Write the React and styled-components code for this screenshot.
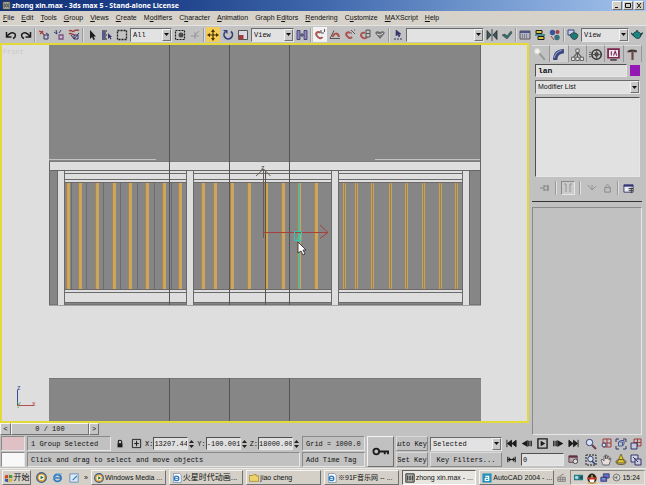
import { useState } from 'react';
import styled, { createGlobalStyle, css } from 'styled-components';

const GlobalStyle = createGlobalStyle`
  * {
    box-sizing: border-box;
  }
  body {
    margin: 0;
    background: #c1c1c1;
    color: #101010;
    font-family: "Liberation Sans", "Noto Sans CJK SC", sans-serif;
    font-size: 7px;
    line-height: 10px;
  }
  button, input, select {
    font: inherit;
    color: inherit;
    margin: 0;
    padding: 0;
    border: 0;
    border-radius: 0;
    background: none;
    min-width: 0;
  }
`;

const raised = css`
  border: 1px solid;
  border-color: #f4f4f4 #707070 #707070 #f4f4f4;
`;

const sunken = css`
  border: 1px solid;
  border-color: #8a8a8a #e6e6e6 #e6e6e6 #8a8a8a;
`;

const mono = css`
  font-family: "Liberation Mono", monospace;
  font-size: 7px;
`;

const Page = styled.div`
  min-height: 100vh;
  display: flex;
  flex-direction: column;
`;

const TitleBar = styled.header`
  height: 11px;
  display: flex;
  align-items: center;
  gap: 1px;
  padding: 0 2px;
  color: #fff;
  background: linear-gradient(90deg, #123279 0%, #1d4088 25%, #4068ac 50%, #7398cf 75%, #a3c3ec 100%);
`;

const Title = styled.h1`
  flex: 1;
  margin: 0;
  font-family: "Noto Sans", "Liberation Sans", sans-serif;
  font-size: 7px;
  font-weight: bold;
  white-space: nowrap;
`;

const WindowButton = styled.button`
  && {
    ${raised}
    width: 10px;
    height: 9px;
    background: #d4d0c8;
    display: flex;
  }
`;

const MenuBar = styled.nav`
  height: 14px;
  display: flex;
  align-items: center;
  gap: 7px;
  padding: 0 3px;
  background: #d6d2ca;
`;

const MenuLink = styled.a`
  color: inherit;
  text-decoration: none;
  white-space: nowrap;
`;

const Toolbar = styled.div`
  height: 18px;
  display: flex;
  align-items: center;
  gap: 1px;
  padding: 0 2px 0 4px;
  border-top: 1px solid #e4e4e4;
  background: #c3c3c3;
`;

const Separator = styled.span`
  width: 2px;
  height: 14px;
  border-left: 1px solid #9a9a9a;
  border-right: 1px solid #dedede;
  flex: none;
`;

const ToolButton = styled.button`
  && {
    width: 14px;
    height: 15px;
    flex: none;
    display: flex;
    align-items: center;
    justify-content: center;
    background: ${props => props.$fill || 'none'};
  }
`;

const SelectBox = styled.span`
  border: 1px solid;
  border-color: #6a6a6a #e6e6e6 #e6e6e6 #6a6a6a;
  position: relative;
  display: flex;
  height: 14px;
  width: ${props => props.$width ? `${props.$width}px` : 'auto'};
  flex: ${props => props.$width ? 'none' : '1'};
  min-width: 0;
  background: #e2e2e2;

  select {
    ${props => !props.$plain && mono}
    appearance: none;
    width: 100%;
    padding: 0 10px 0 2px;
    outline: none;
  }
`;

const DropArrow = styled.span`
  ${raised}
  position: absolute;
  top: 0;
  right: 0;
  bottom: 0;
  width: 9px;
  background: #c8c8c8;
  pointer-events: none;
  display: flex;
  align-items: center;
  justify-content: center;
`;

const Workspace = styled.main`
  flex: 1;
  display: flex;
  align-items: stretch;
`;

const LeftColumn = styled.div`
  flex: 1;
  min-width: 0;
  display: flex;
  flex-direction: column;
`;

const Viewport = styled.section`
  flex: 1;
  min-height: 200px;
  display: flex;
  border: 2px solid #e3d93a;
  background: #dedede;

  svg {
    flex: 1;
    width: 100%;
    min-width: 0;
    height: auto;
  }
`;

const TimeSlider = styled.div`
  ${mono}
  height: 12px;
  display: flex;
`;

const TimeButton = styled.button`
  && {
    ${raised}
    width: ${props => props.$width}px;
    display: flex;
    align-items: center;
    justify-content: center;
    background: #c4c4c4;
    white-space: pre;
  }
`;

const SidePanel = styled.aside`
  width: 117px;
  display: flex;
  flex-direction: column;
  padding: 2px 4px 0 3px;
  background: #c1c1c1;
`;

const Tabs = styled.div`
  display: flex;
  height: 17px;
`;

const Tab = styled.button`
  && {
    flex: 1;
    display: flex;
    align-items: center;
    justify-content: center;
    border-right: 1px solid #969696;
    border-top: 1px solid #dcdcdc;
    background: ${props => props.$active ? '#d0d0d0' : 'none'};
  }
`;

const PanelBody = styled.div`
  padding: 2px 2px 0 3px;
  display: flex;
  flex-direction: column;
  gap: 3px;
`;

const NameRow = styled.div`
  display: flex;
  align-items: center;
  gap: 3px;
`;

const NameInput = styled.input`
  && {
    border: 1px solid;
    border-color: #505050 #e6e6e6 #e6e6e6 #505050;
    flex: 1;
    height: 13px;
    padding-left: 2px;
    font-family: "Liberation Mono", monospace;
    font-size: 8px;
    font-weight: bold;
    background: #e0e0e0;
  }
`;

const Swatch = styled.button`
  && {
    width: 10px;
    height: 11px;
    background: #9318b4;
  }
`;

const StackList = styled.div`
  border: 1px solid;
  border-color: #505050 #e6e6e6 #e6e6e6 #505050;
  height: 80px;
  background: #e1e1e1;
`;

const StackTools = styled.div`
  height: 16px;
  display: flex;
  align-items: center;
  justify-content: space-between;
  padding: 0 6px 0 4px;
`;

const Rollout = styled.div`
  flex: 1;
  margin-top: 5px;
  ${sunken}
`;

const Rule = styled.hr`
  width: 100%;
  margin: 5px 0 0;
  border: 0;
  border-top: 1px solid #333;
`;

const StatusBar = styled.section`
  ${mono}
  height: 33px;
  display: flex;
  gap: 2px;
  padding: 1px 2px 0 1px;
  background: #c1c1c1;
`;

const Stack = styled.div`
  display: flex;
  flex-direction: column;
  gap: 1px;
  width: ${props => props.$width ? `${props.$width}px` : 'auto'};
  flex: ${props => props.$width ? 'none' : '1'};
  min-width: 0;
`;

const Row = styled.div`
  height: 15px;
  display: flex;
  align-items: center;
  gap: 2px;
`;

const Listener = styled.div`
  ${sunken}
  height: 15px;
  background: ${props => props.$fill};
`;

const Readout = styled.output`
  ${sunken}
  height: 15px;
  padding: 2px 3px;
  flex: none;
  width: ${props => props.$width ? `${props.$width}px` : 'auto'};
  white-space: nowrap;
  overflow: hidden;
`;

const Field = styled.label`
  display: flex;
  align-items: center;
  flex: 1;
  min-width: 0;
`;

const NumberInput = styled.input`
  && {
    border: 1px solid;
    border-color: #505050 #e6e6e6 #e6e6e6 #505050;
    flex: 1;
    width: 20px;
    height: 13px;
    background: #e0e0e0;
  }
`;

const FlatButton = styled.button`
  && {
    ${raised}
    ${props => props.$shadow && 'border-color: #dadada #8a8a8a #8a8a8a #dadada;'}
    height: ${props => props.$tall ? 31 : 15}px;
    width: ${props => props.$width ? `${props.$width}px` : '100%'};
    display: flex;
    align-items: center;
    justify-content: ${props => props.$end ? 'flex-end' : 'center'};
    overflow: hidden;
    white-space: nowrap;
  }
`;

const Playback = styled.div`
  display: grid;
  grid-template-columns: repeat(5, 1fr);
  width: 77px;
  flex: none;
  align-items: center;
  justify-items: center;
`;

const FrameInput = styled.input`
  && {
    border: 1px solid;
    border-color: #505050 #e6e6e6 #e6e6e6 #505050;
    grid-column: span 3;
    width: 43px;
    height: 13px;
    padding-left: 1px;
    background: #e0e0e0;
  }
`;

const NavGrid = styled.div`
  display: grid;
  grid-template-columns: repeat(4, 1fr);
  width: 61px;
  flex: none;
  align-items: center;
  justify-items: center;
`;

const TaskBar = styled.footer`
  height: 18px;
  display: flex;
  align-items: center;
  gap: 3px;
  padding: 1px 1px 1px 2px;
  border-top: 1px solid #efede8;
  background: #d4d0c8;
`;

const StartButton = styled.button`
  && {
    ${raised}
    height: 15px;
    width: 29px;
    display: flex;
    align-items: center;
    justify-content: center;
    flex: none;
    font-size: 8px;
    white-space: nowrap;
  }
`;

const QuickLaunch = styled.div`
  display: flex;
  align-items: center;
  justify-content: space-between;
  width: 54px;
  padding-left: 2px;
  flex: none;
`;

const Task = styled.button`
  && {
    ${raised}
    ${props => props.$active && 'border-color: #606060 #fff #fff #606060; background: #e8e6e1;'}
    flex: 1 1 0;
    height: 15px;
    padding: 0 1px 0 2px;
    display: flex;
    align-items: center;
    gap: 1px;
    font-size: ${props => props.$size || 7}px;
    white-space: nowrap;
    overflow: hidden;
  }
`;

const Tray = styled.div`
  ${sunken}
  height: 15px;
  width: 75px;
  display: flex;
  align-items: center;
  justify-content: space-between;
  padding: 0 4px 0 2px;
  flex: none;
`;

const IconButton = styled.button`
  && {
    display: flex;
    align-items: center;
    justify-content: center;
    ${props => props.$pressed && 'border: 1px solid; border-color: #8a8a8a #e6e6e6 #e6e6e6 #8a8a8a; background: #cacaca;'}
  }
`;

const Glyph = styled.svg`
  flex: none;
`;

const K = '#1c1c1c';
const NAVY = '#34346a';
const RED = '#a33a3a';
const TEAL = '#1c7a78';

// every drawing sits on a 12 x 12 grid
const art = {
  undo: <path d="M1.5 3v5h5M2 7.500C4 4 8 2.500 10 5c1.200 2-.5 4-2 4.500" stroke={K} strokeWidth="1.500" />,
  redo: <path d="M10.500 3v5h-5M10 7.500C8 4 4 2.500 2 5c-1.200 2 .5 4 2 4.500" stroke={K} strokeWidth="1.500" />,
  link: <><path d="M1 2l3 1 2 3M2 5l3-3" stroke={RED} strokeWidth="1.300" /><path d="M6 6h4v4H6zM8 4l3 2" stroke={NAVY} /></>,
  unlink: <><path d="M1 3l3 2M3 1l1 4M8 1L6 4" stroke={NAVY} /><path d="M6 6h4v4H6z" stroke="#7b4f86" strokeWidth="1.300" /></>,
  bind: <><path d="M1 2c3-2 3 2 5 0s3 0 5-1M1 5c3-2 3 2 5 0" stroke={RED} strokeWidth="1.300" /><path d="M3 6l3 4 5-6M6 6h4v4H6z" stroke={NAVY} /></>,
  arrow: <path d="M4 1v9l2-2 1.500 3 1.500-.700L7.500 7.500H10z" fill={K} />,
  byName: <><path d="M1 2h5M1 4h4M1 6h5M1 8h4M1 10h5" stroke={K} /><path d="M1 1.500h3v9H1z" fill="#555a86" /><path d="M7 4v6l1.500-1.500 1 2 1-.5-1-2H11z" fill={NAVY} /></>,
  marquee: <path d="M1.500 1.500h9v9h-9z" stroke={K} strokeWidth="1.300" strokeDasharray="2 1" />,
  crossing: <><path d="M1.500 1.500h9v9h-9z" stroke={K} strokeWidth="1.200" strokeDasharray="2 1" /><circle cx="7" cy="6" r="2.500" fill="#4a4a4a" /></>,
  filter: <path d="M2 7h8M6 3v7M6 6l4-4" stroke="#959595" />,
  move: <path d="M6 0l2 3H6.600v2.400H9V4l3 2-3 2V6.600H6.600V9H8l-2 3-2-3h1.400V6.600H3V8L0 6l3-2v1.400h2.400V3H4z" fill="#4b3000" />,
  rotate: <><path d="M3 3a4.200 4.200 0 1 0 6-.5" stroke="#34407a" strokeWidth="1.700" /><path d="M1 1h4.500v4z" fill="#34407a" /></>,
  scale: <><path d="M1.500 1.500h9v9h-9z" stroke="#555" fill="#d8d8e4" /><path d="M2 6h4.500v4.500H2z" fill={RED} /></>,
  pivot: <><path d="M1 1.500h3v9H1zM8 1.500h3v9H8z" fill="#8d88b8" stroke={NAVY} strokeWidth=".8" /><path d="M4 6h4M6 4v4" stroke={NAVY} /></>,
  snap: <><path d="M6.500 3.500C3 2 1 4.500 3 7s4 3 5.500 1" stroke="#ab5450" strokeWidth="2" /><path d="M7 1v3h3M10.500 0v3" stroke="#555" /></>,
  angle: <><path d="M1 9.500l4-8M1 9.500h10" stroke="#555" /><path d="M4 8c0-4 5-5 6 0" stroke="#ab5450" strokeWidth="2" /></>,
  percent: <><path d="M6.500 4C3 2 1 5 3 7s3 3 5 1" stroke="#ab5450" strokeWidth="2" /><path d="M7 1l4 4M7 4h1M10 1h1" stroke="#555" /></>,
  spinner: <><path d="M6 4C2 3 1 6 3 8s3 2 5 0" stroke="#ab5450" strokeWidth="2" /><path d="M7 1h4v7H7zM7 4.500h4" stroke="#555" /></>,
  keys: <><path d="M1 4l2-2 3 1 3-1 2 2-5 6z" fill="#707070" /><path d="M3 5l3 1 3-2" stroke="#ddd" /></>,
  named: <><path d="M4 1v6l1.500-1.500L7 8l1-1-1-2h2z" fill={NAVY} stroke={NAVY} strokeWidth=".6" /><path d="M2 10h8" stroke={NAVY} strokeDasharray="2 1" /></>,
  mirror: <path d="M1 1.500v9L5 6zM11 1.500v9L7 6zM6 0v12" fill="#3d5a60" stroke={K} strokeWidth=".7" />,
  align: <path d="M1 6l3-1 2 2 4-5 1 2-5 6z" fill="#2e6e68" stroke="#4a4a4a" strokeWidth=".6" />,
  layers: <><path d="M1 2h10v8H1z" fill="#b5b5c7" stroke="#555" /><path d="M1 3h10" stroke="#4c5488" strokeWidth="2" /><path d="M3 6h6M3 8h6" stroke="#555" strokeDasharray="1 1" /></>,
  curves: <><path d="M2 1.500h6v3H2zM4 7.500h6v3H4z" fill="#d6c33f" stroke={K} /><path d="M1 6h10" stroke={TEAL} strokeWidth="1.500" /></>,
  schematic: <><circle cx="3.500" cy="3.500" r="2.700" fill="#3656a0" /><circle cx="8.500" cy="3" r="2" fill="#a63f3f" /><circle cx="8" cy="8.500" r="2.700" fill="#35717a" /><path d="M2 7l3 4" stroke={RED} /></>,
  material: <><path d="M1 1h6v5H1z" fill="#cdd0ed" stroke="#34407a" /><path d="M3 6c2-3 6-3 8 0-1 6-6 6-8 0z" fill={TEAL} stroke={K} strokeWidth=".6" /></>,
  teapot: <><path d="M2 5c2-3 6-3 8 0 0 6-6 6-8 0z" fill="#1f8583" stroke="#24484a" /><path d="M0 4l3 3M12 4c-2 0-2 3-3 3M5 2h2" stroke="#24484a" strokeWidth="1.300" /></>,
  create: <><path d="M5 5l5 6" stroke="#999" strokeWidth="2" /><path d="M3 0v6M0 3h6M1 1l4 4M5 1L1 5" stroke="#f6f6f0" /></>,
  modify: <><path d="M1 11C1 4 5 1 11 1v4C7 5 5 7 5 11z" fill="#39477c" /><path d="M2 9c1-4 3-6 7-7" stroke="#8c9bd0" /></>,
  hierarchy: <><path d="M6 4L2 9M6 4l4 5M6 4v5" stroke="#555" /><path d="M4.500 1h3v3h-3zM.5 8.500h3v3h-3zM8.500 8.500h3v3h-3zM4.500 8.500h3v3h-3z" fill="#e5e5e5" stroke="#555" strokeWidth=".8" /></>,
  motion: <><circle cx="7" cy="6" r="4.300" stroke="#303030" strokeWidth="1.400" /><circle cx="7" cy="6" r="1.500" stroke="#303030" /><path d="M3 6h8M7 2v8M0 4h2M0 6h2M0 8h2" stroke="#505050" strokeWidth=".8" /></>,
  display: <><path d="M1 1h10v8H1z" fill="#ece8f0" stroke="#7e2550" strokeWidth="1.600" /><path d="M4 3v4M6 7l1.500-4L9 7" stroke="#7e2550" /><path d="M3 11h6" stroke="#444" strokeWidth="1.500" /></>,
  utilities: <><path d="M1 4c1-3 4-3 9-2v2H7.500L7 3 4 4z" fill="#3f3636" /><path d="M6 3v8" stroke="#6d4444" strokeWidth="2" /></>,
  pin: <path d="M1 6h4M5 3v6M5 4h4v4H5M9 3v6" stroke="#858585" />,
  endResult: <path d="M4 2v8M8 2v8M2 2h2M8 2h2" stroke="#959595" />,
  unique: <path d="M2 3l4 5M6 3v5M6 8l4-4" stroke="#929292" />,
  trash: <path d="M3 5h6v5H3zM4 5c0-4 4-4 4 0" stroke="#858585" />,
  configure: <><path d="M1 2h10v8H1z" fill="#ededf5" stroke="#333563" /><path d="M1 3h10" stroke="#34347a" strokeWidth="2" /><path d="M6 6h5M6 8h5M9 5v6" stroke="#333" /></>,
  lock: <><path d="M3 5h6v5H3z" fill={K} /><path d="M4 5V3c0-2 4-2 4 0v2" stroke={K} strokeWidth="1.300" /></>,
  absolute: <><path d="M1.500 1.500h9v9h-9z" stroke={K} /><path d="M6 3v6M3.500 6h5" stroke={K} /><circle cx="6" cy="6" r="1" fill={K} /></>,
  key: <><circle cx="3" cy="6" r="2" stroke={K} strokeWidth="1.300" /><path d="M5 6h7M9 6v2M11.300 6v2" stroke={K} strokeWidth="1.300" /></>,
  start: <path d="M1 2v8M1.500 6L6 2.500v7zM6.500 6L11 2.500v7z" fill={K} stroke={K} />,
  prev: <path d="M1 6l4.500-2.500v5zM7.500 3v6M10 3v6" fill={K} stroke={K} strokeWidth="1.500" />,
  play: <><path d="M1 1h10v10H1z" stroke={K} strokeWidth="1.500" /><path d="M4 3l5 3-5 3z" fill={K} /></>,
  next: <path d="M11 6L6.500 3.500v5zM4.500 3v6M2 3v6" fill={K} stroke={K} strokeWidth="1.500" />,
  end: <path d="M11 2v8M10.500 6L6 2.500v7zM5.500 6L1 2.500v7z" fill={K} stroke={K} />,
  keyMode: <path d="M2 3v6M10 3v6M2 6h8M4 4v4M8 4v4" stroke={K} strokeWidth="1.300" />,
  timeConfig: <><path d="M1 2h9v7H1z" fill="#bba9b5" stroke="#5f3040" /><path d="M1 3h9" stroke="#5f3040" strokeWidth="2" /><circle cx="8" cy="8" r="2.500" fill="#ddd" stroke="#444" /></>,
  zoom: <><circle cx="4.500" cy="4.500" r="3.200" fill="#d9e4f3" stroke="#34407a" /><path d="M7 7l4 4" stroke="#6d3c52" strokeWidth="2" /></>,
  zoomAll: <><path d="M3 1h8v8H3zM7 1v8M3 5h8" stroke={RED} /><circle cx="4" cy="7" r="2" fill="#ddd" stroke="#34407a" /></>,
  extents: <><path d="M1 1h3M1 1v3M11 1H8M11 1v3M1 11h3M1 11V8M11 11H8M11 11V8" stroke={NAVY} /><path d="M3.500 4h4v4h-4zM3.500 4l2-1.500H9V6L7.500 8" stroke="#4a5898" /></>,
  extentsAll: <><path d="M4 1h7v7H4zM7.500 1v7M4 4.500h7" stroke={RED} /><path d="M1 5h6v6H1z" fill="#c5c7db" stroke={NAVY} /></>,
  region: <><path d="M1 1h10v10H1z" stroke={K} strokeDasharray="2 1" /><circle cx="5.500" cy="5" r="2.700" fill="#dce5ed" stroke="#34407a" /><path d="M7 7l3 3" stroke="#34407a" strokeWidth="1.500" /></>,
  pan: <path d="M3 11L1 6l1-1 2 2V2h1.500v3V1H7v4l1-3 1 .5V6l1-2 1 .5-2 6.500z" fill="#e8dede" stroke="#444" strokeWidth=".7" />,
  orbit: <><path d="M6 0l4 9H2z" fill="#e0c52c" stroke="#65571b" strokeWidth=".8" /><ellipse cx="6" cy="8" rx="5" ry="2.500" stroke="#695e2c" /></>,
  maximize: <><path d="M1 1h7v7H1z" stroke={NAVY} fill="#d4d4e5" /><path d="M5 5h6v6H5zM3 3l5 5" stroke={NAVY} fill="#c8c8e0" /></>,
  flag: <><path d="M1 3l4-1v4L1 7z" fill="#d14325" /><path d="M6 2l4 1v3L6 6z" fill="#46953f" /><path d="M1 7.500l4-.5v4l-4-1z" fill="#3558ad" /><path d="M6 7h4v3l-4 1z" fill="#dfb12d" /></>,
  media: <><circle cx="6" cy="6" r="5.200" fill="#e7a62e" stroke="#3d5a8c" strokeWidth="1.400" /><circle cx="6" cy="6" r="3" fill="#f4f4e8" /><path d="M5 4l3.500 2L5 8z" fill="#276f3a" /></>,
  ie: <><circle cx="6" cy="6.500" r="3.800" stroke="#2777c4" strokeWidth="2" /><path d="M3 6.500h6.500" stroke="#2777c4" strokeWidth="1.500" /><path d="M1 9C2 5 7 1 11 2" stroke="#67a8df" /></>,
  iePage: <><path d="M2 .5h7l2 2v9H2z" fill="#fff" stroke="#657ca0" strokeWidth=".8" /><circle cx="5.500" cy="6.500" r="2.700" stroke="#2777c4" strokeWidth="1.500" /><path d="M3 6.500h5" stroke="#2777c4" /></>,
  desktop: <><path d="M1 1h10v10H1z" fill="#dce9f4" stroke="#5b86b0" /><path d="M4 8l5-5 1 1-5 5z" fill="#2777c4" /></>,
  folder: <path d="M.5 3h4l1-1h3v1.500h3V10H.5z" fill="#efd36a" stroke="#96781f" strokeWidth=".8" />,
  max: <><path d="M1 1h10v10H1z" fill="#b6bbb2" stroke="#333" strokeWidth="1.200" /><path d="M3 3v6M9 3v6M5 4h2v4H5z" stroke="#333" /></>,
  cad: <><path d="M.5.5h11v11H.5z" fill="#2492be" /><path d="M4 4h4v5H4V6.500h4" stroke="#fff" strokeWidth="1.400" /></>,
  keyboard: <path d="M1 5h9v5H1zM1 7.500h9M4 5v5M7 5v5M3 4l5-3" stroke="#777" />,
  camera: <><path d="M1 3h10v6H1z" fill="#267a85" /><circle cx="4" cy="6" r="2" fill="#a3d8dc" /><circle cx="9" cy="6" r="1.500" fill="#174d57" /></>,
  penguin: <><ellipse cx="6" cy="6.500" rx="4.500" ry="5" fill="#222" /><ellipse cx="6" cy="8" rx="2.500" ry="2.700" fill="#fff" /><path d="M1.500 6.500h9" stroke="#cf3525" strokeWidth="2" /><path d="M2 11h3M7 11h3M5 4h2" stroke="#e9a12d" strokeWidth="1.500" /></>,
  network: <><path d="M4 1h7v5H4zM1 5h7v5H1z" fill="#6670c0" stroke="#34347a" /><path d="M3 7h3" stroke="#a5c8ef" /></>,
  volume: <><circle cx="6" cy="6" r="4.500" fill="#ddd" stroke="#555" /><path d="M3 5h2l2-2v6L5 7H3z" fill="#777" /></>,
};

function Icon({ name, size = 12 }) {
  return (
    <Glyph width={size} height={size} viewBox="0 0 12 12" fill="none" aria-hidden="true">
      {art[name]}
    </Glyph>
  );
}

function Tool({ icon, label, fill }) {
  return (
    <ToolButton $fill={fill} aria-label={label}>
      <Icon name={icon} />
    </ToolButton>
  );
}

function Dropdown({ label, options, width, plain }) {
  return (
    <SelectBox $width={width} $plain={plain}>
      <select aria-label={label}>
        {options.map(o => <option key={o}>{o}</option>)}
      </select>
      <DropArrow>
        <svg width="5" height="3" viewBox="0 0 5 3"><path d="M0 0h5L2.500 3z" fill="#111" /></svg>
      </DropArrow>
    </SelectBox>
  );
}

// an underscore marks the accelerator letter
const menus = ['_File', '_Edit', '_Tools', '_Group', '_Views', '_Create', 'M_odifiers', 'C_haracter', '_Animation', 'Graph E_ditors', '_Rendering', 'C_ustomize', '_MAXScript', '_Help'];

function MenuItem({ text }) {
  const [before, after] = text.split('_');
  return (
    <MenuLink href="#">{before}<u>{after[0]}</u>{after.slice(1)}</MenuLink>
  );
}

const tools = [
  ['undo', 'Undo'], ['redo', 'Redo'], null,
  ['link', 'Select and Link'], ['unlink', 'Unlink Selection'], ['bind', 'Bind to Space Warp'], null,
  ['arrow', 'Select Object'], ['byName', 'Select by Name'], ['marquee', 'Selection Region'],
];

const snaps = [
  ['snap', 'Snap Toggle', '#f2f2f2'], ['angle', 'Angle Snap'], ['percent', 'Percent Snap'],
  ['spinner', 'Spinner Snap'], ['keys', 'Edit Named Selections'], null, ['named', 'Named Selection Sets'],
];

const renderTools = list => list.map((t, i) => (
  t ? <Tool key={t[0]} icon={t[0]} label={t[1]} fill={t[2]} /> : <Separator key={i} />
));

// fence geometry, in viewport units
const posts = [57, 186, 331, 462];
const bays = [
  { x: 64, w: 122, bars: [68, 80, 97, 114, 130, 147, 164, 180], thin: false, lines: [71, 86, 103, 120, 137, 154, 171] },
  { x: 193, w: 138, bars: [203, 215, 232, 249, 266, 283, 299, 316], thin: false, lines: [] },
  { x: 338, w: 124, bars: [344, 356, 372, 390, 406, 423, 440, 456], thin: true, lines: [] },
];

function Scene() {
  return (
    <svg viewBox="2 45 525 376" preserveAspectRatio="xMinYMin slice" role="img" aria-label="Front view">
      <rect x="49" y="45" width="432" height="116" fill="#868686" />
      <path d="M49 159.500h107M375 159.500h106" stroke="#c2c2c2" />
      <rect x="49" y="161" width="432" height="10" fill="#dedede" />
      <path d="M49 161.500h432" stroke="#7c7c7c" />
      <rect x="49" y="170" width="432" height="135" fill="#868686" />
      <path d="M49 170.500h432M49.500 161v144M480.500 45v260M49 305h432" stroke="#666" />
      {bays.map(b => (
        <g key={b.x}>
          <rect x={b.x} y="171" width={b.w} height="11" fill="#dedede" />
          <rect x={b.x} y="290" width={b.w} height="12" fill="#dedede" />
          <path d={`M${b.x} 173.500h${b.w}M${b.x} 179.500h${b.w}M${b.x} 182.500h${b.w}M${b.x} 289.500h${b.w}M${b.x} 292.500h${b.w}M${b.x} 302.500h${b.w}`} stroke="#6a6a6a" />
          {b.lines.map(x => <path key={x} d={`M${x}.500 183v106`} stroke="#6a6e70" />)}
          {b.bars.map(x => (b.thin ? (
            <g key={x}>
              <rect x={x - 1} y="183" width="3" height="106" fill="#c9a252" />
              <path d={`M${x}.500 183v106`} stroke="#9c8554" />
            </g>
          ) : (
            <g key={x}>
              <rect x={x - 2} y="183" width="4" height="106" fill="#a08658" />
              <rect x={x - 1} y="183" width="3" height="106" fill="#cda65c" />
            </g>
          )))}
        </g>
      ))}
      {posts.map(x => (
        <g key={x}>
          <rect x={x} y="171" width="7" height="134" fill="#dedede" />
          <path d={`M${x}.500 171v134M${x + 7}.500 171v134`} stroke="#6a6a6a" />
        </g>
      ))}
      <rect x="49" y="378" width="432" height="43" fill="#868686" />
      <path d="M49 378.500h432" stroke="#777" />
      <path d="M169.500 45v260M229.500 45v260M289.500 45v260M265.500 171v134M169.500 378v43M229.500 378v43M289.500 378v43" stroke="#555" />
      <path d="M299 183v106" stroke="#63b294" strokeWidth="2" />
      <g fill="none">
        <path d="M263.500 238v-68M256 176l7.500-7 7 7" stroke="#655c55" />
        <path d="M263 232.500h64M320 225l8 7.500-8 6" stroke="#a5403c" />
        <path d="M294.500 231.500h7v9h-7zM296 240l5-7" stroke="#35c5b8" />
      </g>
      <path d="M298 242v11l3-2 2 4 2-1-2-4h3z" fill="#fff" stroke="#222" strokeWidth=".8" />
      <path d="M17.500 390v16" stroke="#3a4a9c" />
      <path d="M17 405.500h17" stroke="#b54d4d" />
      <g fontFamily="Liberation Sans, sans-serif" fontSize="7">
        <text x="3" y="54" fill="#cacaca" fontFamily="Liberation Mono, monospace">Front</text>
        <text x="261" y="170" fill="#444">z</text>
        <text x="17" y="390" fill="#3a4a9c">z</text>
        <text x="32" y="406" fill="#b54d4d">x</text>
        <text x="17" y="406" fill="#5a9a4a">y</text>
      </g>
    </svg>
  );
}

function Coordinate({ axis, initial }) {
  const [value, setValue] = useState(initial);
  return (
    <Field>
      {axis}:
      <NumberInput value={value} onChange={e => setValue(e.target.value)} />
      <svg width="7" height="10" viewBox="0 0 7 10" aria-hidden="true">
        <path d="M1 4l2.500-3L6 4zM1 6l2.500 3L6 6z" fill="#222" />
      </svg>
    </Field>
  );
}

const tasks = [
  ['media', 'Windows Media ...'],
  ['iePage', '火星时代动画...', 8],
  ['folder', 'jiao cheng'],
  ['iePage', '※91F音乐网 -- ...'],
  ['max', 'zhong xin.max - ...'],
  ['cad', 'AutoCAD 2004 - ...'],
];

export default function App() {
  const [tab, setTab] = useState('modify');
  const [name, setName] = useState('lan');

  return (
    <Page>
      <GlobalStyle />
      <TitleBar>
        <Icon name="max" size={9} />
        <Title>zhong xin.max - 3ds max 5 - Stand-alone License</Title>
        <WindowButton aria-label="Minimize"><svg width="8" height="7"><path d="M2 5.500h3" stroke="#111" /></svg></WindowButton>
        <WindowButton aria-label="Restore"><svg width="8" height="7"><path d="M1.500 1.500h5v4h-5z" stroke="#111" fill="none" /></svg></WindowButton>
        <WindowButton aria-label="Close"><svg width="8" height="7"><path d="M2 1l4 5M6 1L2 6" stroke="#111" /></svg></WindowButton>
      </TitleBar>

      <MenuBar>
        {menus.map(m => <MenuItem key={m} text={m} />)}
      </MenuBar>

      <Toolbar>
        {renderTools(tools)}
        <Dropdown label="Selection Filter" options={['All']} width={42} />
        <Tool icon="crossing" label="Window/Crossing" />
        <Tool icon="filter" label="Select and Manipulate" />
        <Separator />
        <Tool icon="move" label="Select and Move" fill="#f2ce58" />
        <Tool icon="rotate" label="Select and Rotate" />
        <Tool icon="scale" label="Select and Scale" />
        <Dropdown label="Reference Coordinate System" options={['View']} width={43} />
        <Tool icon="pivot" label="Use Pivot Point Center" />
        <Separator />
        {renderTools(snaps)}
        <Dropdown label="Named Selections" options={['']} />
        <Tool icon="mirror" label="Mirror" />
        <Tool icon="align" label="Align" />
        <Separator />
        <Tool icon="layers" label="Track View" />
        <Tool icon="curves" label="Schematic View" />
        <Tool icon="schematic" label="Material Editor" />
        <Separator />
        <Tool icon="material" label="Render Scene" />
        <Dropdown label="Render Type" options={['View']} width={48} />
        <Tool icon="teapot" label="Quick Render" />
      </Toolbar>

      <Workspace>
        <LeftColumn>
          <Viewport>
            <Scene />
          </Viewport>
          <TimeSlider>
            <TimeButton $width={11} aria-label="Previous frame">&lt;</TimeButton>
            <TimeButton $width={78}>0 / 100</TimeButton>
            <TimeButton $width={10} aria-label="Next frame">&gt;</TimeButton>
          </TimeSlider>
        </LeftColumn>

        <SidePanel>
          <Tabs>
            {['create', 'modify', 'hierarchy', 'motion', 'display', 'utilities'].map(t => (
              <Tab key={t} $active={t === tab} aria-label={t} onClick={() => setTab(t)}>
                <Icon name={t} size={13} />
              </Tab>
            ))}
          </Tabs>
          <PanelBody>
            <NameRow>
              <NameInput aria-label="Object name" value={name} onChange={e => setName(e.target.value)} />
              <Swatch aria-label="Object color" />
            </NameRow>
            <NameRow>
              <Dropdown label="Modifier List" options={['Modifier List']} plain />
            </NameRow>
            <StackList />
            <StackTools>
              <IconButton aria-label="Pin Stack"><Icon name="pin" /></IconButton>
              <Separator />
              <IconButton $pressed aria-label="Show End Result"><Icon name="endResult" /></IconButton>
              <Separator />
              <IconButton aria-label="Make Unique"><Icon name="unique" /></IconButton>
              <IconButton aria-label="Remove Modifier"><Icon name="trash" size={11} /></IconButton>
              <Separator />
              <IconButton aria-label="Configure Modifier Sets"><Icon name="configure" size={11} /></IconButton>
            </StackTools>
          </PanelBody>
          <Rule />
          <Rollout />
        </SidePanel>
      </Workspace>

      <StatusBar>
        <Stack $width={24}>
          <Listener $fill="#dfc0c4" />
          <Listener $fill="#f8f8f8" />
        </Stack>
        <Stack>
          <Row>
            <Readout $width={84}>1 Group Selected</Readout>
            <ToolButton aria-label="Selection Lock"><Icon name="lock" size={10} /></ToolButton>
            <ToolButton aria-label="Absolute Mode"><Icon name="absolute" size={11} /></ToolButton>
            <Coordinate axis="X" initial="13207.447" />
            <Coordinate axis="Y" initial="-100.001" />
            <Coordinate axis="Z" initial="18000.001" />
          </Row>
          <Readout>Click and drag to select and move objects</Readout>
        </Stack>
        <Stack $width={63}>
          <Readout>Grid = 1000.0</Readout>
          <Readout>Add Time Tag</Readout>
        </Stack>
        <FlatButton $tall $width={27} aria-label="Set Keys"><Icon name="key" size={17} /></FlatButton>
        <Stack $width={32}>
          <FlatButton $shadow $end>Auto Key</FlatButton>
          <FlatButton $shadow>Set Key</FlatButton>
        </Stack>
        <Stack $width={72}>
          <Row><Dropdown label="Key set" options={['Selected']} /></Row>
          <FlatButton $shadow>Key Filters...</FlatButton>
        </Stack>
        <Playback>
          {['start', 'prev', 'play', 'next', 'end', 'keyMode'].map(p => (
            <IconButton key={p} aria-label={p}><Icon name={p} size={11} /></IconButton>
          ))}
          <FrameInput aria-label="Current frame" defaultValue="0" />
          <IconButton aria-label="Time Configuration"><Icon name="timeConfig" size={11} /></IconButton>
        </Playback>
        <NavGrid>
          {['zoom', 'zoomAll', 'extents', 'extentsAll', 'region', 'pan', 'orbit', 'maximize'].map(n => (
            <IconButton key={n} aria-label={n}><Icon name={n} size={12} /></IconButton>
          ))}
        </NavGrid>
      </StatusBar>

      <TaskBar>
        <StartButton><Icon name="flag" size={10} />开始</StartButton>
        <QuickLaunch>
          <IconButton aria-label="Media Player"><Icon name="media" size={11} /></IconButton>
          <IconButton aria-label="Internet Explorer"><Icon name="ie" size={11} /></IconButton>
          <IconButton aria-label="Show Desktop"><Icon name="desktop" size={10} /></IconButton>
          <span>»</span>
        </QuickLaunch>
        {tasks.map(([icon, text, size]) => (
          <Task key={text} $size={size} $active={icon === 'max'}>
            <Icon name={icon} size={10} />
            {text}
          </Task>
        ))}
        <Icon name="keyboard" size={10} />
        <Tray>
          <Icon name="camera" size={11} />
          <Icon name="penguin" size={12} />
          <Icon name="network" size={10} />
          <Icon name="volume" size={9} />
          <span>15:24</span>
        </Tray>
      </TaskBar>
    </Page>
  );
}
